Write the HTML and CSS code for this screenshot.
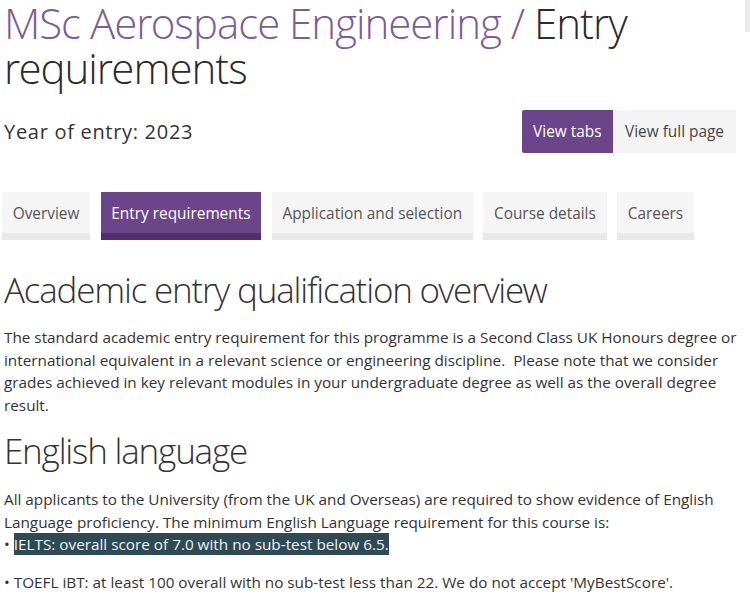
FILE: index.html
```html
<!DOCTYPE html>
<html lang="en">
<head>
<meta charset="utf-8">
<title>MSc Aerospace Engineering / Entry requirements</title>
<link rel="stylesheet" href="styles.css">
</head>
<body>
<div class="corner"></div>
<main class="page">
  <h1 class="title"><span class="course">MSc Aerospace Engineering /</span> Entry requirements</h1>
  <div class="year-row">
    <p class="year">Year of entry: 2023</p>
    <div class="view-switch">
      <a class="view-btn active">View tabs</a>
      <a class="view-btn">View full page</a>
    </div>
  </div>
  <nav class="tabs">
    <a class="tab">Overview</a>
    <a class="tab active">Entry requirements</a>
    <a class="tab">Application and selection</a>
    <a class="tab">Course details</a>
    <a class="tab">Careers</a>
  </nav>
  <h2 class="section-title">Academic entry qualification overview</h2>
  <p class="text">The standard academic entry requirement for this programme is a Second Class UK Honours degree or international equivalent in a relevant science or engineering discipline.&nbsp; Please note that we consider grades achieved in key relevant modules in your undergraduate degree as well as the overall degree result.</p>
  <h2 class="section-title second">English language</h2>
  <p class="text english">All applicants to the University (from the UK and Overseas) are required to show evidence of English Language proficiency. The minimum English Language requirement for this course is:<br>• <span class="highlight">IELTS: overall score of 7.0 with no sub-test below 6.5.</span></p>
  <p class="text toefl">• TOEFL iBT: at least 100 overall with no sub-test less than 22. We do not accept 'MyBestScore'.</p>
</main>
</body>
</html>
```
FILE: styles.css
```css
html, body {
  margin: 0;
  padding: 0;
  background: #fff;
}
body {
  font-family: "Open Sans", "Liberation Sans", sans-serif;
  color: #333;
  overflow: hidden;
}
.corner {
  position: absolute;
  top: 0;
  right: 0;
  width: 5px;
  height: 32px;
  background: #ececec;
}
.page {
  padding: 0 0 0 4px;
}
.title {
  margin: 0;
  font-family: "Open Sans Light", "Open Sans", sans-serif;
  font-weight: 300;
  font-size: 42px;
  line-height: 45px;
  letter-spacing: -1px;
  color: #2b2b2b;
}
.course {
  color: #7a5c9c;
}
.year-row {
  display: flex;
  justify-content: space-between;
  align-items: center;
  margin-top: 20px;
  padding-right: 14px;
}
.year {
  margin: 0;
  font-size: 20px;
  letter-spacing: 0.7px;
  color: #333;
}
.view-switch {
  display: flex;
  height: 43px;
}
.view-btn {
  display: flex;
  align-items: center;
  padding: 0 12px;
  font-size: 15.4px;
  color: #444;
  background: #f4f4f4;
}
.view-btn.active {
  padding: 0 11.5px;
  background: #6b4489;
  color: #fff;
  border-radius: 2px 0 0 2px;
}
.tabs {
  display: flex;
  gap: 10.5px;
  margin-top: 39px;
  margin-left: -2px;
}
.tab {
  display: flex;
  align-items: center;
  height: 39px;
  padding: 2px 10.7px 0;
  font-size: 15.4px;
  color: #555;
  background: #f5f5f5;
  border-bottom: 7px solid #e9e9e9;
}
.tab.active {
  background: #6b4489;
  color: #fff;
  border-bottom-color: #4f2e6b;
}
.section-title {
  margin: 28px 0 0;
  font-family: "Open Sans Light", "Open Sans", sans-serif;
  font-weight: 300;
  font-size: 35px;
  line-height: 44px;
  letter-spacing: -1.2px;
  color: #333;
}
.section-title.second {
  margin-top: 13px;
}
.text {
  margin: 14px 0 0;
  font-size: 15.3px;
  line-height: 22.5px;
  color: #333;
}
.english {
  margin-top: 15px;
}
.highlight {
  background: #2e4a55;
  color: #f2f2f2;
  padding: 1px 0;
}
.toefl {
  margin-top: 15.5px;
}
```
